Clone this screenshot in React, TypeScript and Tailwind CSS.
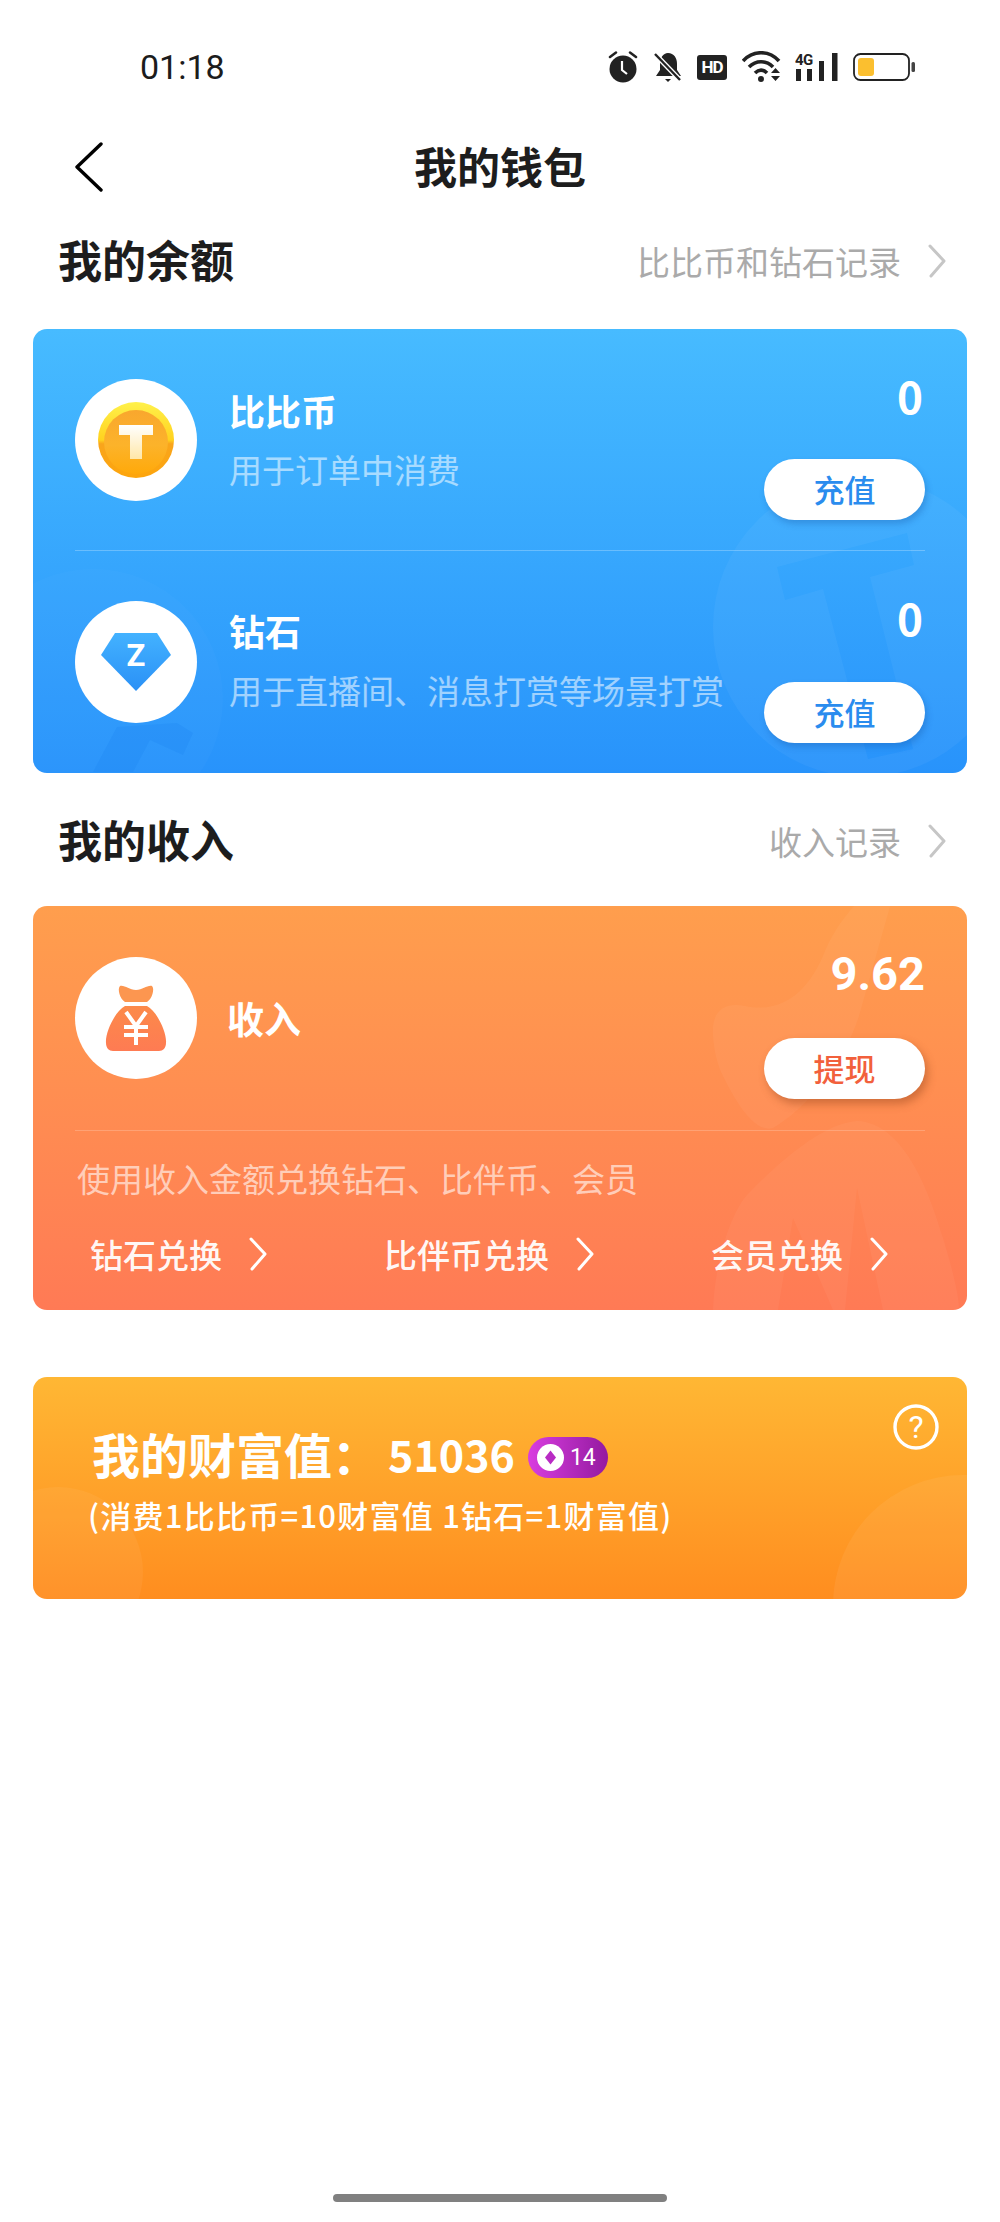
import React from "react";

function Chevron({ className, stroke, width = 3 }: { className: string; stroke: string; width?: number }) {
  return (
    <svg className={className} viewBox="0 0 18 34" fill="none">
      <polyline points="2,2 16,17 3,32" stroke={stroke} strokeWidth={width} strokeLinecap="round" strokeLinejoin="round" />
    </svg>
  );
}

function StatusIcons() {
  return (
    <div className="flex items-center">
      <svg className="w-[30px] h-[32px]" viewBox="0 0 30 32">
        <circle cx="15" cy="18" r="13.5" fill="#222" />
        <path d="M2 6 L8 1.5 M28 6 L22 1.5" stroke="#222" strokeWidth="2.5" strokeLinecap="round" />
        <path d="M14 10 V19 L19 23" stroke="#fff" strokeWidth="2.2" fill="none" />
      </svg>
      <svg className="w-[30px] h-[32px] ml-[15px]" viewBox="0 0 30 32">
        <path d="M15 2 C21 2 24 7 24 13 V19 L28 25 H3 L7 19 V13 C7 7 10 2 15 2 Z" fill="#222" />
        <path d="M12 28 H18 L15 31 Z" fill="#222" />
        <path d="M2 3 L27 29" stroke="#fff" strokeWidth="5" />
        <path d="M2 3 L27 29" stroke="#222" strokeWidth="2.4" />
      </svg>
      <div className="w-[30px] h-[25px] ml-[14px] rounded-[3px] bg-[#222] text-white text-[17px] font-bold leading-[25px] text-center [font-family:Roboto,sans-serif] tracking-[-1px]">
        HD
      </div>
      <svg className="w-[41px] h-[32px] ml-[15px]" viewBox="0 0 41 32">
        <path d="M1 10 C11 -1 27 -1 37 10" stroke="#222" strokeWidth="3.6" fill="none" />
        <path d="M7 16 C14 9 24 9 31 16" stroke="#222" strokeWidth="3.6" fill="none" />
        <path d="M13 22 C17 18 21 18 25 22" stroke="#222" strokeWidth="3.6" fill="none" />
        <circle cx="19" cy="28" r="3" fill="#222" />
        <path d="M29 22 L33.5 17 L38 22 Z M29 25 H38 L33.5 30 Z" fill="#222" />
      </svg>
      <svg className="w-[44px] h-[30px] ml-[12px]" viewBox="0 0 44 30">
        <text x="0" y="13" fontSize="15" fontWeight="700" fontFamily="Roboto, sans-serif" fill="#222" letterSpacing="-0.5">4G</text>
        <rect x="1" y="17" width="5" height="12" fill="#222" />
        <rect x="12" y="17" width="5" height="12" fill="#222" />
        <rect x="24" y="9" width="5" height="20" fill="#222" />
        <rect x="37" y="1" width="5.5" height="28" fill="#222" />
      </svg>
      <svg className="w-[62px] h-[28px] ml-[14px]" viewBox="0 0 62 28">
        <rect x="1" y="1" width="55" height="26" rx="6.5" fill="#fff" stroke="#222" strokeWidth="1.8" />
        <rect x="5" y="5" width="16" height="18" rx="3" fill="#fbbf2f" />
        <rect x="58.5" y="9" width="3.5" height="10" rx="1.5" fill="#444" />
      </svg>
    </div>
  );
}

function SectionHead({ title, link, top, bottom }: { title: string; link: string; top: string; bottom: string }) {
  return (
    <div className={`flex items-center justify-between h-[50px] pl-[58px] pr-[54px] ${top} ${bottom}`}>
      <span className="mb-[5px] text-[44px] leading-[50px] font-bold text-[#1d1d1d]">{title}</span>
      <div className="flex items-center">
        <span className="text-[33px] leading-[50px] text-[#aaaaaa]">{link}</span>
        <Chevron className="w-[18px] h-[34px] ml-[27px]" stroke="#c6c6c6" />
      </div>
    </div>
  );
}

function Circle({ children }: { children: React.ReactNode }) {
  return (
    <div className="w-[122px] h-[122px] shrink-0 rounded-full bg-white flex items-center justify-center">
      {children}
    </div>
  );
}

function Coin() {
  return (
    <svg className="w-[76px] h-[76px]" viewBox="0 0 76 76">
      <defs>
        <linearGradient id="rim" x1="0" y1="0" x2="0" y2="1">
          <stop offset="0" stopColor="#fff14a" />
          <stop offset="0.5" stopColor="#ffd21f" />
          <stop offset="0.55" stopColor="#f9a51c" />
          <stop offset="1" stopColor="#fda50c" />
        </linearGradient>
        <linearGradient id="face" x1="0" y1="0" x2="0" y2="1">
          <stop offset="0" stopColor="#f9a72e" />
          <stop offset="0.55" stopColor="#fcb32a" />
          <stop offset="1" stopColor="#ffa90a" />
        </linearGradient>
        <linearGradient id="tee" x1="0" y1="0" x2="0" y2="1">
          <stop offset="0" stopColor="#ffffff" />
          <stop offset="1" stopColor="#ffe7a8" />
        </linearGradient>
      </defs>
      <circle cx="38" cy="38" r="38" fill="url(#rim)" />
      <circle cx="38" cy="40" r="32" fill="url(#face)" />
      <path d="M21 23 H55 V33 H44 V57 H32 V33 H21 Z" fill="url(#tee)" />
    </svg>
  );
}

function Diamond() {
  return (
    <svg className="w-[72px] h-[58px]" viewBox="0 0 72 58">
      <defs>
        <linearGradient id="dia" x1="0" y1="0" x2="0" y2="1">
          <stop offset="0" stopColor="#43b2ff" />
          <stop offset="1" stopColor="#2a90f6" />
        </linearGradient>
      </defs>
      <path d="M15 0 H57 L71 22 L36 58 L1 22 Z" fill="url(#dia)" />
      <text x="36" y="33" textAnchor="middle" fontSize="31" fontWeight="700" fontFamily="Roboto, sans-serif" fill="#fff">Z</text>
    </svg>
  );
}

function Bag() {
  return (
    <svg className="w-[62px] h-[66px]" viewBox="0 0 62 66">
      <defs>
        <linearGradient id="bag" x1="0" y1="0" x2="0" y2="1">
          <stop offset="0" stopColor="#fc8a4a" />
          <stop offset="1" stopColor="#fe7b53" />
        </linearGradient>
      </defs>
      <path d="M15 1 C20 0 24 5 31 5 C38 5 42 0 47 1 C50 4 47 14 42 17 H20 C15 14 12 4 15 1 Z" fill="#fc9650" />
      <path d="M20 21 H42 C52 26 62 48 61 58 C61 63 58 66 54 66 H8 C4 66 1 63 1 58 C0 48 10 26 20 21 Z" fill="url(#bag)" />
      <path d="M21 27 L31 41 L41 27 M19 42 H43 M19 50 H43 M31 41 V60" stroke="#fff" strokeWidth="4" fill="none" />
    </svg>
  );
}

function PillButton({ label, color, strong }: { label: string; color: string; strong?: boolean }) {
  return (
    <div
      className={`w-[161px] h-[61px] rounded-full bg-white flex items-center justify-center text-[31px] font-medium ${color} ${
        strong ? "shadow-[3px_5px_8px_rgba(150,70,30,0.45)]" : "shadow-[2px_4px_6px_rgba(20,80,160,0.3)]"
      }`}
    >
      {label}
    </div>
  );
}

function BalanceRow({
  icon,
  title,
  sub,
  circleTop,
  textTop,
  subTop,
  valueTop,
  btnTop,
  height,
}: {
  icon: React.ReactNode;
  title: string;
  sub: string;
  circleTop: string;
  textTop: string;
  subTop: string;
  valueTop: string;
  btnTop: string;
  height: string;
}) {
  return (
    <div className={`flex items-start px-[42px] ${height}`}>
      <div className={circleTop}>
        <Circle>{icon}</Circle>
      </div>
      <div className={`ml-[32px] ${textTop}`}>
        <div className="text-[36px] leading-[40px] font-bold text-white">{title}</div>
        <div className={`text-[33px] leading-[40px] text-white/55 whitespace-nowrap ${subTop}`}>{sub}</div>
      </div>
      <div className="ml-auto flex flex-col items-end">
        <div className={`text-[44px] leading-[48px] font-bold text-white pr-[2px] ${valueTop}`}>0</div>
        <div className={btnTop}>
          <PillButton label="充值" color="text-[#2a8cee]" />
        </div>
      </div>
    </div>
  );
}

function ExchangeLink({ label }: { label: string }) {
  return (
    <div className="flex items-center">
      <span className="text-[33px] leading-[44px] font-medium text-white/95">{label}</span>
      <Chevron className="w-[18px] h-[34px] ml-[27px]" stroke="#ffffff" width={3} />
    </div>
  );
}

export default function App() {
  return (
    <div className="w-[1000px] h-[2222px] bg-white flex flex-col [font-family:'Noto_Sans_CJK_SC',sans-serif]">
      {/* status bar */}
      <div className="h-[134px] flex items-center justify-between pl-[140px] pr-[85px] shrink-0">
        <span className="text-[34px] text-[#1c1c1c] [font-family:Roboto,sans-serif]">01:18</span>
        <StatusIcons />
      </div>

      {/* nav */}
      <div className="relative h-[64px] flex items-center justify-center shrink-0">
        <svg className="absolute left-[74px] top-[8px] w-[30px] h-[50px]" viewBox="0 0 30 50" fill="none">
          <polyline points="27,2 3,25 27,48" stroke="#000" strokeWidth="3.4" strokeLinecap="round" strokeLinejoin="round" />
        </svg>
        <span className="mb-[3px] text-[43px] leading-[64px] font-bold text-[#1d1d1d]">我的钱包</span>
      </div>

      <SectionHead title="我的余额" link="比比币和钻石记录" top="mt-[38px]" bottom="mb-[43px]" />

      {/* balance card */}
      <div className="relative mx-[33px] h-[444px] rounded-[14px] overflow-hidden bg-gradient-to-b from-[#47bbff] to-[#2893fb] shrink-0">
        <svg className="absolute inset-0 w-full h-full" viewBox="0 0 934 444">
          <path
            fillRule="evenodd"
            fill="#ffffff"
            fillOpacity="0.045"
            d="M680 298 a150 150 0 1 0 300 0 a150 150 0 1 0 -300 0 Z M744 238 L874 204 L881 236 L837 248 L880 420 L835 430 L790 260 L752 271 Z"
          />
          <path d="M60 443 L84 398 L144 394 L160 404 L150 426 L117 411 L100 443 Z" fill="#1c86f2" fillOpacity="0.3" />
          <circle cx="60" cy="370" r="130" fill="#ffffff" fillOpacity="0.02" />
        </svg>
        <div className="relative flex flex-col">
          <BalanceRow
            icon={<Coin />}
            title="比比币"
            sub="用于订单中消费"
            height="h-[221px]"
            circleTop="mt-[50px]"
            textTop="mt-[61px]"
            subTop="mt-[19px]"
            valueTop="mt-[42px]"
            btnTop="mt-[40px]"
          />
          <div className="mx-[42px] h-px bg-white/25" />
          <BalanceRow
            icon={<Diamond />}
            title="钻石"
            sub="用于直播间、消息打赏等场景打赏"
            height="h-[222px]"
            circleTop="mt-[50px]"
            textTop="mt-[59px]"
            subTop="mt-[20px]"
            valueTop="mt-[42px]"
            btnTop="mt-[41px]"
          />
        </div>
      </div>

      <SectionHead title="我的收入" link="收入记录" top="mt-[43px]" bottom="mb-[40px]" />

      {/* income card */}
      <div className="relative mx-[33px] h-[404px] rounded-[14px] overflow-hidden bg-gradient-to-b from-[#ff9e4d] to-[#ff7a55] shrink-0">
        <svg className="absolute inset-0 w-full h-full" viewBox="0 0 934 404">
          <path
            d="M680 130 C678 104 692 96 712 100 C740 106 770 96 790 50 C800 24 815 6 830 -10 L860 -10 L826 110 C810 160 770 205 740 222 C720 228 700 190 690 170 C684 158 681 144 680 130 Z"
            fill="#ffffff"
            fillOpacity="0.045"
          />
          <path
            fillRule="evenodd"
            d="M824 215 C870 217 895 282 910 332 C922 372 926 392 926 404 L680 404 C682 352 700 302 716 287 C745 257 790 217 824 215 Z M824 282 L812 404 L850 404 Z M760 312 L745 404 L800 404 Z"
            fill="#ffffff"
            fillOpacity="0.04"
          />
        </svg>
        <div className="relative flex flex-col h-full">
          <div className="flex items-start px-[42px] h-[224px]">
            <div className="mt-[51px] flex items-center">
              <Circle>
                <Bag />
              </Circle>
              <span className="ml-[30px] text-[37px] leading-[40px] font-bold text-white">收入</span>
            </div>
            <div className="ml-auto flex flex-col items-end">
              <div className="mt-[44px] text-[47px] leading-[48px] font-bold text-white [font-family:Roboto,sans-serif]">9.62</div>
              <div className="mt-[40px]">
                <PillButton label="提现" color="text-[#f2603c]" strong />
              </div>
            </div>
          </div>
          <div className="mx-[42px] h-px bg-white/20" />
          <div className="mt-[27px] pl-[44px] text-[33px] leading-[40px] text-white/60 whitespace-nowrap">
            使用收入金额兑换钻石、比伴币、会员
          </div>
          <div className="mt-[34px] flex justify-between pl-[57px] pr-[79px]">
            <ExchangeLink label="钻石兑换" />
            <ExchangeLink label="比伴币兑换" />
            <ExchangeLink label="会员兑换" />
          </div>
        </div>
      </div>

      {/* wealth card */}
      <div className="relative mx-[33px] mt-[67px] h-[222px] rounded-[14px] overflow-hidden bg-gradient-to-b from-[#ffb734] to-[#ff8d1f] shrink-0">
        <svg className="absolute inset-0 w-full h-full" viewBox="0 0 934 222">
          <circle cx="930" cy="228" r="130" fill="#ffffff" fillOpacity="0.06" />
          <circle cx="25" cy="195" r="85" fill="#ffffff" fillOpacity="0.05" />
        </svg>
        <div className="relative flex items-start justify-between h-full">
          <div className="pl-[59px] pt-[48px]">
            <div className="flex items-center h-[56px]">
              <span className="text-[48px] leading-[56px] font-bold text-white whitespace-nowrap">我的财富值：</span>
              <span className="ml-[8px] text-[43px] leading-[56px] font-bold text-white">51036</span>
              <div className="ml-[13px] mt-[8px] w-[80px] h-[41px] rounded-full bg-gradient-to-r from-[#d93de0] to-[#941aa0] flex items-center pl-[9px]">
                <svg className="w-[27px] h-[27px]" viewBox="0 0 27 27">
                  <circle cx="13.5" cy="13.5" r="13.5" fill="#fff" />
                  <path d="M13.5 6.5 L19 13.5 L13.5 20.5 L8 13.5 Z" fill="#b92bc4" />
                </svg>
                <span className="ml-[6px] text-[23px] leading-[41px] text-white [font-family:Roboto,sans-serif]">14</span>
              </div>
            </div>
            <div className="mt-[14px] -ml-[4px] text-[31px] leading-[40px] font-medium tracking-[1.25px] text-white whitespace-nowrap">
              (消费1比比币=10财富值 1钻石=1财富值)
            </div>
          </div>
          <svg className="mt-[27px] mr-[28px] w-[46px] h-[46px]" viewBox="0 0 46 46">
            <circle cx="23" cy="23" r="21" fill="none" stroke="#fff" strokeWidth="3.4" />
            <text x="23" y="34" textAnchor="middle" fontSize="32" fontFamily="Roboto, sans-serif" fill="#fff">?</text>
          </svg>
        </div>
      </div>

      {/* home indicator */}
      <div className="mt-[595px] mx-auto w-[334px] h-[8px] rounded-full bg-[#808080] shrink-0" />
    </div>
  );
}
